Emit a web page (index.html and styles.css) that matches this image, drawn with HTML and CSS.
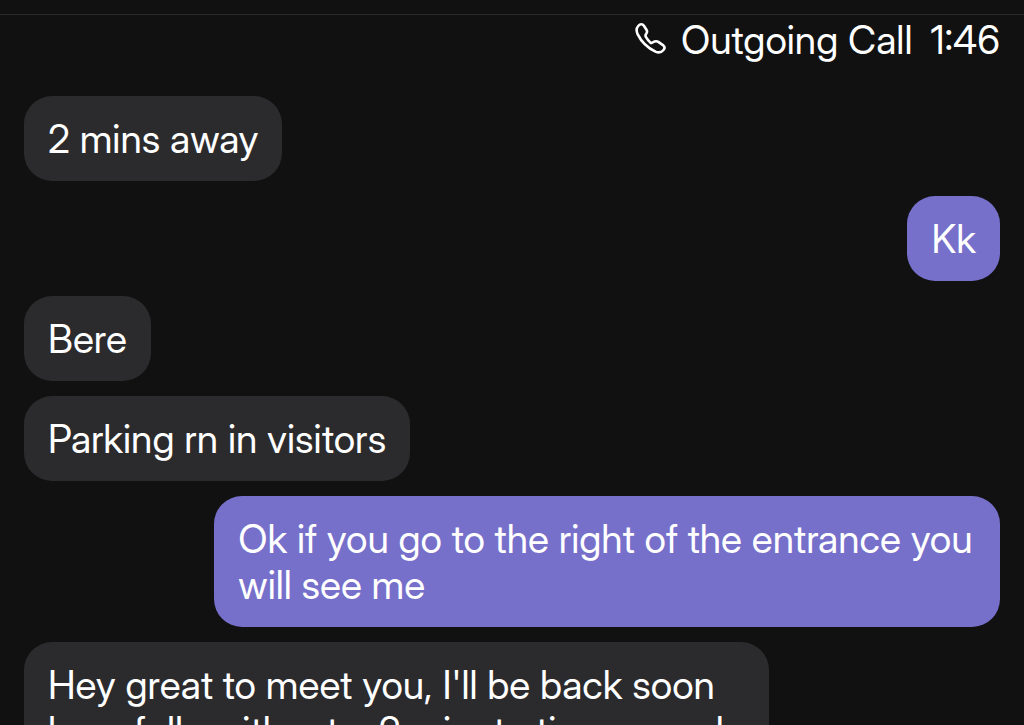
FILE: index.html
```
<!DOCTYPE html>
<html lang="en">
<head>
    <meta charset="UTF-8">
    <meta name="viewport" content="width=device-width, initial-scale=1.0">
    <title>Messages</title>
    <link rel="stylesheet" href="styles.css">
</head>
<body>
    <header class="topbar"></header>
    <main class="chat">
        <div class="call">
            <svg class="call-icon" viewBox="5 3 32 32" aria-hidden="true">
                <path d="M8.200 7C10.200 4.800 12.500 4.800 13.900 6.800L16.600 11C17.500 12.500 17.200 13.500 16.200 14.800C15.200 16 15.200 16.800 16 18.200C17.200 20.200 18.600 21.900 20.200 23.400C21 24.100 21.700 24.100 22.600 23.500C24.600 22.200 26.600 21.800 28.300 22.900L33.300 26.400C35 27.900 34.900 29.400 33.500 31C31.500 33.400 28.700 34 25.500 32.600C18 29 11.300 22.500 7.700 15.300C6.200 12.200 6.200 9.300 8.200 7Z"/>
            </svg>
            <span class="call-label">Outgoing Call</span>
            <span class="call-time">1:46</span>
        </div>
        <div class="bubble received">2 mins away</div>
        <div class="bubble sent">Kk</div>
        <div class="bubble received">Bere</div>
        <div class="bubble received">Parking rn in visitors</div>
        <div class="bubble sent">Ok if you go to the right of the entrance you will see me</div>
        <div class="bubble received long">Hey great to meet you, I'll be back soon<br>hopefully without a 2 minute time crunch</div>
    </main>
</body>
</html>
```
FILE: styles.css
```
body {
    margin: 0;
    height: 100vh;
    overflow: hidden;
    background: #111111;
    color: #ffffff;
    font-family: "Inter Display", Inter, "Liberation Sans", sans-serif;
    font-size: 39px;
    line-height: 46px;
}
.topbar {
    height: 14px;
    border-bottom: 1px solid #2a2a2a;
}
.chat {
    display: flex;
    flex-direction: column;
    gap: 15px;
    padding: 2px 24px 0;
}
.call {
    display: flex;
    align-items: center;
    align-self: flex-end;
    margin-bottom: 18px;
}
.call-icon {
    width: 32px;
    height: 32px;
    margin-right: 14px;
    margin-bottom: 4px;
    fill: none;
    stroke: #ffffff;
    stroke-width: 2.6;
    stroke-linejoin: round;
}
.call-time {
    margin-left: 18px;
}
.bubble {
    box-sizing: border-box;
    max-width: 80.5%;
    padding: 20px 24px 19px;
    border-radius: 28px;
}
.received {
    align-self: flex-start;
    background: #2b2b2d;
}
.sent {
    align-self: flex-end;
    background: #7670cb;
}
.long {
    min-width: 76.3%;
}
```
